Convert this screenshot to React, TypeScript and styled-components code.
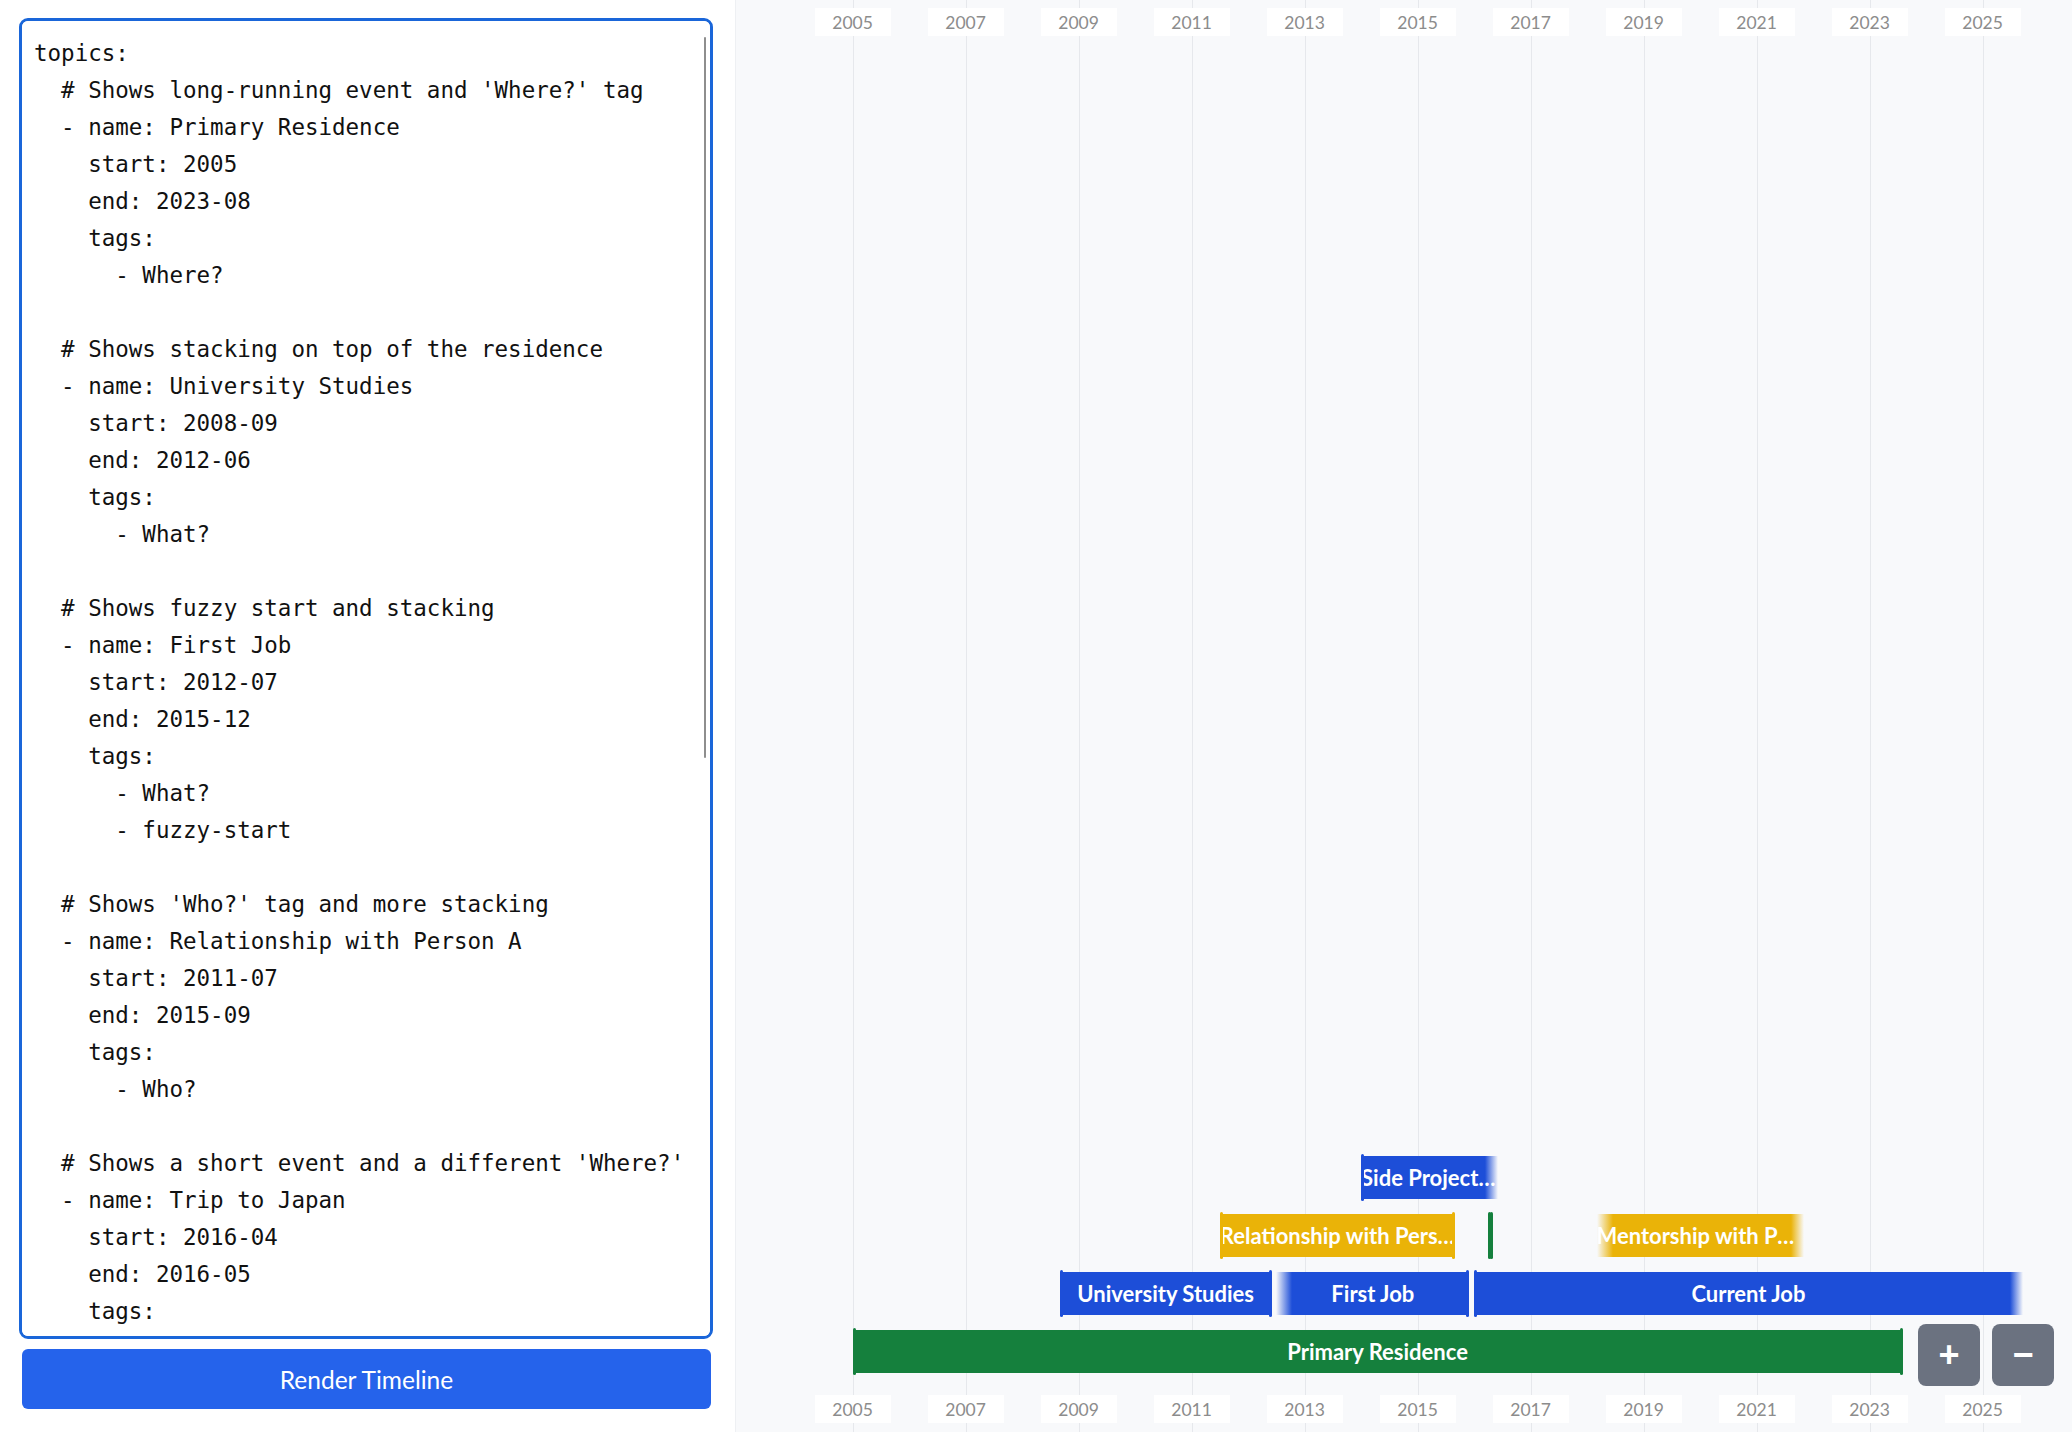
import React from 'react';
import styled, { createGlobalStyle, css } from 'styled-components';

const GlobalStyle = createGlobalStyle`
  html, body { margin: 0; padding: 0; height: 100%; }
  body { background: #fff; font-family: Lato, "Liberation Sans", sans-serif; overflow: hidden; }
  #root { height: 100%; }
`;

const YAML = `topics:
  # Shows long-running event and 'Where?' tag
  - name: Primary Residence
    start: 2005
    end: 2023-08
    tags:
      - Where?

  # Shows stacking on top of the residence
  - name: University Studies
    start: 2008-09
    end: 2012-06
    tags:
      - What?

  # Shows fuzzy start and stacking
  - name: First Job
    start: 2012-07
    end: 2015-12
    tags:
      - What?
      - fuzzy-start

  # Shows 'Who?' tag and more stacking
  - name: Relationship with Person A
    start: 2011-07
    end: 2015-09
    tags:
      - Who?

  # Shows a short event and a different 'Where?'
  - name: Trip to Japan
    start: 2016-04
    end: 2016-05
    tags:
      - Where?

  # Shows fuzzy end and a third stacking level
  - name: Side Project Alpha
    start: 2014-01
    end: 2016-05
    tags:
      - What?
      - fuzzy-end

  # Shows an ongoing event
  - name: Current Job
    start: 2016-01
    tags:
      - What?
      - fuzzy-end

  # Shows fuzzy start and fuzzy end
  - name: Mentorship with Person B
    start: 2018-03
    end: 2021-10
    tags:
      - Who?
      - fuzzy-start
      - fuzzy-end
`;

const ORIGIN = 117.6;
const PX_PER_YEAR = 56.5;
const xOf = (year: number) => ORIGIN + (year - 2005) * PX_PER_YEAR;

type Kind = 'what' | 'who' | 'where';
const COLORS: Record<Kind, string> = {
  what: '#1d4ed8',
  who: '#eab308',
  where: '#15803d',
};

interface Topic {
  name: string;
  start: number;
  end: number;
  kind: Kind;
  fuzzyStart?: boolean;
  fuzzyEnd?: boolean;
}

const ROWS: Topic[][] = [
  [{ name: 'Primary Residence', start: 2005, end: 2023 + 7 / 12, kind: 'where' }],
  [
    { name: 'University Studies', start: 2008 + 8 / 12, end: 2012 + 5 / 12, kind: 'what' },
    { name: 'First Job', start: 2012 + 6 / 12, end: 2015 + 11 / 12, kind: 'what', fuzzyStart: true },
    { name: 'Current Job', start: 2016, end: 2025.71, kind: 'what', fuzzyEnd: true },
  ],
  [
    { name: 'Relationship with Person A', start: 2011 + 6 / 12, end: 2015 + 8 / 12, kind: 'who' },
    { name: 'Trip to Japan', start: 2016 + 3 / 12, end: 2016 + 4 / 12, kind: 'where' },
    { name: 'Mentorship with Person B', start: 2018 + 2 / 12, end: 2021 + 10 / 12, kind: 'who', fuzzyStart: true, fuzzyEnd: true },
  ],
  [{ name: 'Side Project Alpha', start: 2014, end: 2016 + 5 / 12, kind: 'what', fuzzyEnd: true }],
];

const TICKS = Array.from({ length: 11 }, (_, i) => 2005 + i * 2);

const Page = styled.div`
  display: flex;
  width: 100vw;
  height: 100vh;
`;

const EditorPanel = styled.aside`
  width: 735px;
  flex: none;
  box-sizing: border-box;
  display: flex;
  flex-direction: column;
  gap: 10px;
  padding: 18px 22px 23px 19px;
  background: #fff;
`;

const EditorFrame = styled.div`
  position: relative;
  flex: 1;
  min-height: 0;
`;

const Editor = styled.textarea`
  display: block;
  width: 100%;
  height: 100%;
  box-sizing: border-box;
  margin: 0;
  padding: 14px 12px 13px;
  border: 3px solid #1a66d9;
  border-radius: 9px;
  outline: none;
  resize: none;
  background: #fff;
  color: #111;
  font-family: "DejaVu Sans Mono", "Liberation Mono", monospace;
  font-size: 22.5px;
  line-height: 37px;
  white-space: pre-wrap;
  overflow-y: auto;
  scrollbar-width: none;
  &::-webkit-scrollbar { display: none; }
`;

const ScrollThumb = styled.div`
  position: absolute;
  top: 19px;
  right: 7px;
  width: 2.5px;
  height: 721px;
  background: #8e8e8e;
  border-radius: 1px;
  pointer-events: none;
`;

const RenderButton = styled.button`
  flex: none;
  height: 60px;
  margin: 0 2px 0 3px;
  border: none;
  border-radius: 6px;
  background: #2563eb;
  color: #fff;
  font-family: Lato, "Liberation Sans", sans-serif;
  font-size: 24.5px;
  cursor: pointer;
`;

const TimelinePanel = styled.section`
  flex: 1;
  position: relative;
  box-sizing: border-box;
  display: flex;
  flex-direction: column;
  padding: 8px 0 9px;
  background: #f8f9fb;
  box-shadow: inset 1px 0 0 #eef0f3;
  overflow: hidden;
`;

const GridLayer = styled.div`
  position: absolute;
  inset: 0;
  pointer-events: none;
`;

const GridLine = styled.div`
  position: absolute;
  top: 0;
  bottom: 0;
  width: 1px;
  background: #e6e8ec;
`;

const Axis = styled.div`
  position: relative;
  flex: none;
  height: 28px;
  z-index: 1;
`;

const AxisLabel = styled.div`
  position: absolute;
  top: 0;
  width: 76px;
  height: 28px;
  margin-left: -38px;
  display: flex;
  align-items: center;
  justify-content: center;
  background: #fff;
  color: #8c8c8c;
  font-family: Lato, "Liberation Sans", sans-serif;
  font-size: 17.5px;
`;

const Canvas = styled.div`
  position: relative;
  z-index: 1;
  flex: 1;
  display: flex;
  flex-direction: column-reverse;
  gap: 15px;
  padding-bottom: 22px;
`;

const Track = styled.div`
  position: relative;
  flex: none;
  height: 43px;
`;

const marker = css`
  content: '';
  position: absolute;
  top: -2px;
  bottom: -2px;
  width: 3px;
  border-radius: 1.5px;
`;

const Bar = styled.div<{ $color: string; $fuzzyStart?: boolean; $fuzzyEnd?: boolean }>`
  position: absolute;
  top: 0;
  height: 43px;
  background: ${({ $color, $fuzzyStart, $fuzzyEnd }) =>
    `linear-gradient(to right, ${$fuzzyStart ? `${$color}00 0px, ${$color} 16px` : `${$color} 0px`}, ${
      $fuzzyEnd ? `${$color} calc(100% - 13px), ${$color}00 100%` : `${$color} 100%`
    })`};

  ${({ $fuzzyStart, $color }) =>
    !$fuzzyStart &&
    css`
      &::before { ${marker}; left: 0; background: ${$color}; }
    `}
  ${({ $fuzzyEnd, $color }) =>
    !$fuzzyEnd &&
    css`
      &::after { ${marker}; right: 0; background: ${$color}; }
    `}
`;

const BarLabel = styled.div`
  height: 100%;
  overflow: hidden;
  white-space: nowrap;
  text-overflow: ellipsis;
  text-align: center;
  color: #fff;
  font-family: Lato, "Liberation Sans", sans-serif;
  font-weight: 700;
  font-size: 22px;
  line-height: 43px;
`;

const ZoomControls = styled.div`
  position: absolute;
  right: 18px;
  bottom: 46px;
  z-index: 2;
  display: flex;
  gap: 12px;
`;

const ZoomButton = styled.button`
  width: 62px;
  height: 62px;
  padding: 0;
  border: none;
  border-radius: 8px;
  background: #6b7280;
  color: #fff;
  font-family: "Liberation Sans", Arial, sans-serif;
  font-weight: 700;
  font-size: 36px;
  line-height: 1;
  display: flex;
  align-items: center;
  justify-content: center;
  cursor: pointer;
`;

function TimelineAxis() {
  return (
    <Axis>
      {TICKS.map((t) => (
        <AxisLabel key={t} style={{ left: xOf(t) }}>
          {t}
        </AxisLabel>
      ))}
    </Axis>
  );
}

export default function App() {
  return (
    <>
      <GlobalStyle />
      <Page>
        <EditorPanel>
          <EditorFrame>
            <Editor defaultValue={YAML} spellCheck={false} />
            <ScrollThumb />
          </EditorFrame>
          <RenderButton>Render Timeline</RenderButton>
        </EditorPanel>
        <TimelinePanel>
          <GridLayer>
            {TICKS.map((t) => (
              <GridLine key={t} style={{ left: Math.round(xOf(t)) }} />
            ))}
          </GridLayer>
          <TimelineAxis />
          <Canvas>
            {ROWS.map((row, i) => (
              <Track key={i}>
                {row.map((topic) => {
                  const left = xOf(topic.start);
                  const width = Math.max(4, xOf(topic.end) - left);
                  return (
                    <Bar
                      key={topic.name}
                      $color={COLORS[topic.kind]}
                      $fuzzyStart={topic.fuzzyStart}
                      $fuzzyEnd={topic.fuzzyEnd}
                      style={{ left, width }}
                    >
                      {width > 30 && <BarLabel>{topic.name}</BarLabel>}
                    </Bar>
                  );
                })}
              </Track>
            ))}
          </Canvas>
          <TimelineAxis />
          <ZoomControls>
            <ZoomButton aria-label="Zoom in">+</ZoomButton>
            <ZoomButton aria-label="Zoom out">−</ZoomButton>
          </ZoomControls>
        </TimelinePanel>
      </Page>
    </>
  );
}
